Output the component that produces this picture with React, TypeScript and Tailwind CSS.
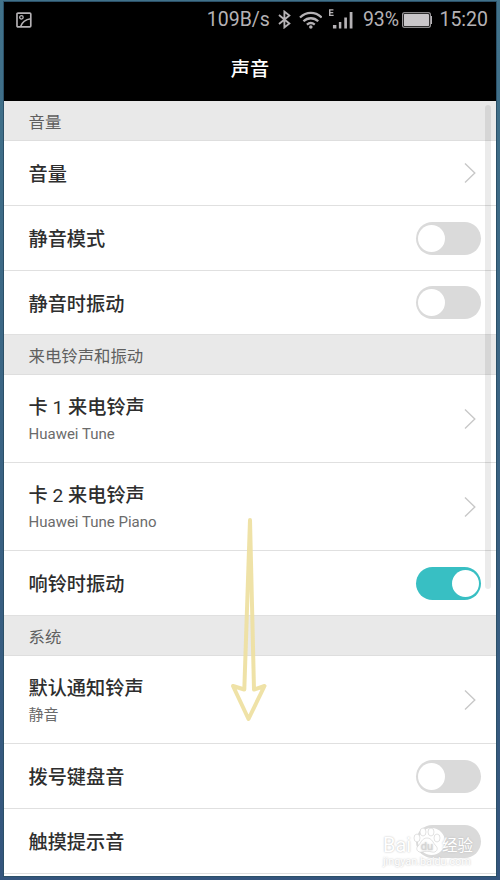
import React from 'react';

type Control = 'chevron' | 'on' | 'off';

interface Setting {
  label: string;
  detail?: string;
  control: Control;
  height: string;
}

interface SettingGroup {
  title: string;
  items: Setting[];
}

const GROUPS: SettingGroup[] = [
  {
    title: '音量',
    items: [
      { label: '音量', control: 'chevron', height: 'h-[65px]' },
      { label: '静音模式', control: 'off', height: 'h-[65px]' },
      { label: '静音时振动', control: 'off', height: 'h-[64px]' },
    ],
  },
  {
    title: '来电铃声和振动',
    items: [
      { label: '卡 1 来电铃声', detail: 'Huawei Tune', control: 'chevron', height: 'h-[88px]' },
      { label: '卡 2 来电铃声', detail: 'Huawei Tune Piano', control: 'chevron', height: 'h-[88px]' },
      { label: '响铃时振动', control: 'on', height: 'h-[65px]' },
    ],
  },
  {
    title: '系统',
    items: [
      { label: '默认通知铃声', detail: '静音', control: 'chevron', height: 'h-[88px]' },
      { label: '拨号键盘音', control: 'off', height: 'h-[65px]' },
      { label: '触摸提示音', control: 'off', height: 'h-[65px]' },
    ],
  },
];

const StatusBar: React.FC = () => (
  <div className="flex h-[35px] items-center pl-3 pr-2 text-[19.5px] leading-none text-[#b5b2b5]">
    <svg className="h-4 w-4" viewBox="0 0 16 16" fill="none" stroke="currentColor" strokeWidth="1.7">
      <rect x="1" y="1" width="14" height="14" rx="1" />
      <circle cx="5.5" cy="5.3" r="1.8" strokeWidth="1.3" />
      <path d="M4.5 15C6 10.5 9.5 7.3 15 6.7" />
    </svg>
    <span className="ml-[175px] w-[63px] whitespace-nowrap">109B/s</span>
    <svg className="ml-2 h-[19px] w-[13px]" viewBox="0 0 13 19" fill="none" stroke="currentColor" strokeWidth="1.9">
      <path d="M1 5l10.5 8.5L6.5 17.5V1.5l5 4L1 14" />
    </svg>
    <svg className="ml-2 h-[18px] w-6" viewBox="0 0 24 18" fill="none" stroke="currentColor" strokeWidth="2.3">
      <path d="M1 6.5C7.5.3 16.5.3 23 6.5M4.5 10.3c4.4-4.1 10.6-4.1 15 0M8 13.7c2.5-2.1 5.5-2.1 8 0" />
      <circle cx="12" cy="16" r="1.8" fill="currentColor" stroke="none" />
    </svg>
    <svg className="ml-[7px] h-[22px] w-[24px]" viewBox="0 0 24 22" fill="currentColor">
      <path d="M0 0h4.5v1.3H1.5v1.5h2.8v1.3H1.5v1.6h3.2V7H0zM4 16h3.5v3.5H4zM10 13h2.5v6.500H10zM15.5 8.5h2.7v11h-2.7zM21 3h2.8v16.5H21z" />
    </svg>
    <span className="ml-[10px] w-9 whitespace-nowrap">93%</span>
    <svg className="ml-[3px] h-4 w-[31px]" viewBox="0 0 31 16" fill="currentColor">
      <rect x=".7" y=".7" width="28" height="14.6" rx="1.3" fill="none" stroke="currentColor" strokeWidth="1.1" />
      <rect x="2" y="2" width="25.4" height="12" rx=".5" fill="#c9c6c9" />
      <path d="M29.2 4h1.5v8h-1.5z" />
    </svg>
    <span className="ml-[7px] whitespace-nowrap">15:20</span>
  </div>
);

const Toggle: React.FC<{ on: boolean }> = ({ on }) => (
  <div
    className={
      on
        ? 'flex h-[33px] w-[65px] items-center justify-end rounded-full bg-[#38bfc3] px-[2px]'
        : 'flex h-[33px] w-[65px] items-center rounded-full bg-[#dadada] px-[2px]'
    }
  >
    <div className="h-[27px] w-[27px] rounded-full bg-white" />
  </div>
);

const Chevron: React.FC = () => (
  <svg className="mr-[5px] h-[22px] w-3" viewBox="0 0 12 22" fill="none" stroke="#c8c8c8" strokeWidth="1.4">
    <path d="M1 1.5l9.8 9.5L1 20.5" />
  </svg>
);

// digits stay at regular weight next to the medium Chinese glyphs
const Label: React.FC<{ text: string }> = ({ text }) => (
  <div className="text-[19.2px] font-medium leading-7 text-[#2e2e2e]">
    {text.split(/(\d)/).map((part, i) =>
      /\d/.test(part) ? (
        <span key={i} className="font-normal">
          {part}
        </span>
      ) : (
        part
      )
    )}
  </div>
);

const SettingRow: React.FC<{ item: Setting }> = ({ item }) => (
  <div className={`flex shrink-0 items-center justify-between border-b border-[#e0e0e0] pl-[24.5px] pr-[15px] ${item.height}`}>
    <div className={item.detail ? 'pt-[3px]' : 'pt-[4px]'}>
      <Label text={item.label} />
      {item.detail && <div className="text-[15px] leading-6 text-[#6b6b6b]">{item.detail}</div>}
    </div>
    {item.control === 'chevron' ? <Chevron /> : <Toggle on={item.control === 'on'} />}
  </div>
);

const Watermark: React.FC = () => (
  <div className="absolute bottom-[8px] left-[379px] flex w-[92px] flex-col text-white [text-shadow:0_0_2px_#b5b5b5]">
    <div className="flex h-[31px] items-end leading-none">
      <span className="w-[29px] text-[20px] leading-[22px]">Bai</span>
      <svg className="h-[31px] w-[30px] shrink-0" viewBox="0 0 30 27" fill="#fff" stroke="#cfcfcf" strokeWidth=".6">
        <ellipse cx="5" cy="11" rx="3" ry="4" />
        <ellipse cx="11" cy="5" rx="3" ry="4" />
        <ellipse cx="19" cy="5" rx="3" ry="4" />
        <ellipse cx="25" cy="11" rx="3" ry="4" />
        <path d="M15 11c5 0 6 5 9 8s0 7-4 6-6-1-10 0-7-3-4-6 4-8 9-8z" />
        <text x="15" y="23" textAnchor="middle" fontSize="11" fill="#d4d4d4" stroke="none">du</text>
      </svg>
      <span className="whitespace-nowrap text-[15.5px] leading-[19px]">经验</span>
    </div>
    <span className="text-[10.8px] leading-[12px]">jingyan.baidu.com</span>
  </div>
);

const App: React.FC = () => {
  return (
    <div className="h-[880px] w-[500px] overflow-hidden bg-gradient-to-b from-[#41728a] to-[#34557d] px-1 pb-1 pt-[2px] font-['Roboto','Noto_Sans_CJK_SC',sans-serif]">
      <div className="relative flex h-[874px] flex-col overflow-hidden bg-white shadow-[0_0_0_1px_#2b5068]">
        <header className="h-[99px] shrink-0 bg-black">
          <StatusBar />
          <h1 className="flex h-16 items-center justify-center pt-[3px] text-[19.2px] font-medium text-white">声音</h1>
        </header>

        {GROUPS.map((group) => (
          <section key={group.title} className="shrink-0">
            <h2 className="flex h-10 items-center border-b border-[#dedede] bg-[#e9e9e9] pl-[24.5px] pt-[5px] text-[16.4px] text-[#5f5f5f]">
              {group.title}
            </h2>
            {group.items.map((item) => (
              <SettingRow key={item.label} item={item} />
            ))}
          </section>
        ))}

        {/* scroll thumb */}
        <div className="absolute right-[5px] top-[103px] h-[484px] w-[6px] rounded-full bg-black/8" />

        {/* swipe hint */}
        <svg
          className="absolute left-[226px] top-[514px] h-[208px] w-[40px]"
          viewBox="0 0 40 208"
          fill="none"
          stroke="#eee0a0"
          strokeOpacity=".92"
          strokeWidth="4"
          strokeLinejoin="round"
        >
          <path d="M20 4L14.3 173.5L3 170L18.500 203L34.5 170L24 173.5Z" />
        </svg>

        <Watermark />
      </div>
    </div>
  );
};

export default App;
